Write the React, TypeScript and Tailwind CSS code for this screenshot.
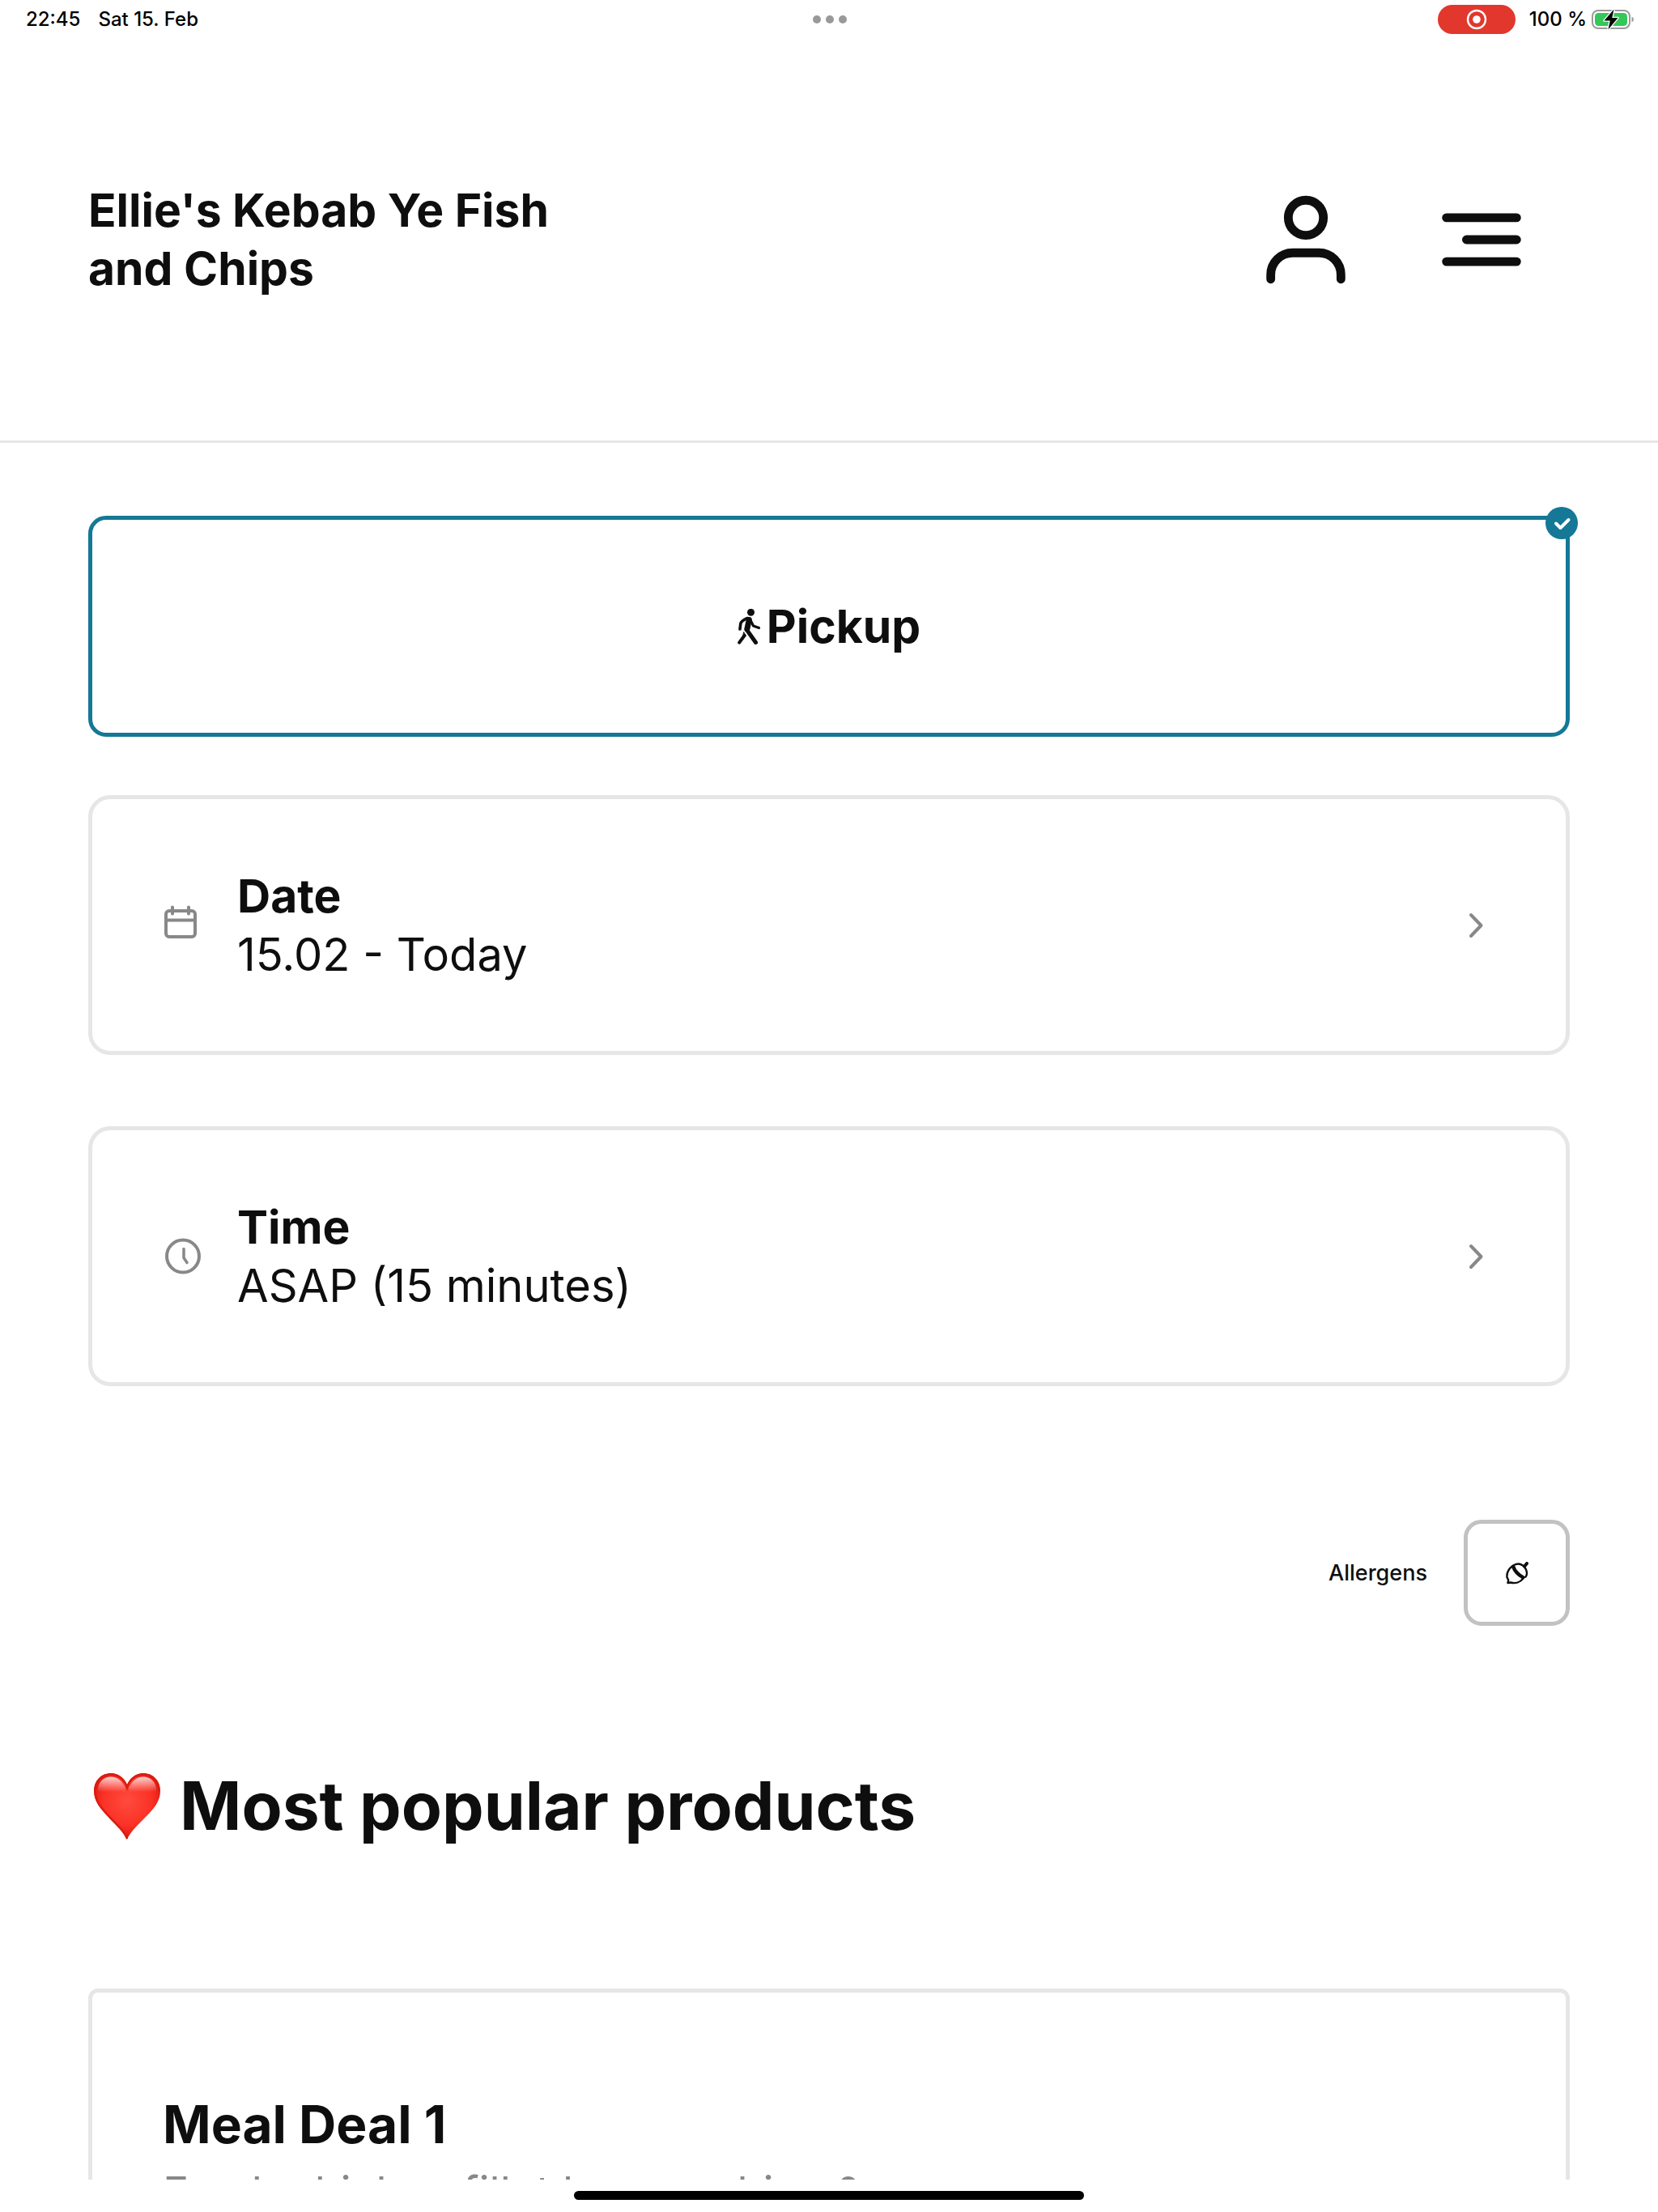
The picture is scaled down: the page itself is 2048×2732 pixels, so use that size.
import type { ReactNode } from "react";

function StatusBar() {
  return (
    <div className="grid h-12 shrink-0 grid-cols-3 items-center pr-[30px] pl-8 text-[24px] leading-[30px] font-medium text-black">
      <div className="flex gap-[22px]">
        <span>22:45</span>
        <span>Sat 15. Feb</span>
      </div>
      <div className="flex justify-center gap-1.5">
        <span className="size-2.5 rounded-full bg-[#999999]" />
        <span className="size-2.5 rounded-full bg-[#999999]" />
        <span className="size-2.5 rounded-full bg-[#999999]" />
      </div>
      <div className="flex items-center justify-end">
        <span className="mr-[17px] flex h-9 w-24 items-center justify-center rounded-full bg-[#e2372d]">
          <svg viewBox="0 0 26 26" className="size-[26px]" aria-hidden="true">
            <circle cx="13" cy="13" r="11" fill="none" stroke="#fff" strokeWidth="2.4" />
            <circle cx="13" cy="13" r="4.8" fill="#fff" />
          </svg>
        </span>
        <span>100 %</span>
        <svg viewBox="0 0 52 28" className="ml-1.5 h-7 w-[52px]" aria-hidden="true">
          <rect x="1" y="3" width="46" height="22" rx="7" fill="none" stroke="#9b9b9b" strokeWidth="2" />
          <path d="M49.500 10.500v7q2.500-1 2.500-3.500t-2.500-3.500z" fill="#9b9b9b" />
          <rect x="4" y="6" width="40" height="16" rx="4.500" fill="#34c759" />
          <path
            d="M27.500 1.500 15.500 15.500h7.300L20.500 26.500 32.500 12h-7.200z"
            fill="#000"
            stroke="#fff"
            strokeWidth="2.600"
            paintOrder="stroke"
            strokeLinejoin="round"
          />
        </svg>
      </div>
    </div>
  );
}

function Header() {
  return (
    <header className="flex shrink-0 items-center justify-between border-b-[3px] border-[#e6e6e6] py-44 pr-[153px] pl-[109px]">
      <h1 className="max-w-[640px] text-[57px] leading-[72px] font-bold">Ellie's Kebab Ye Fish and Chips</h1>
      <div className="flex gap-[87px]">
        <button type="button" aria-label="Account">
          <svg viewBox="0 0 24 24" className="size-[130px]" fill="none" stroke="currentColor" strokeWidth="2" strokeLinecap="round">
            <circle cx="12" cy="7" r="4" />
            <path d="M4 21v-1a5 5 0 0 1 5-5h6a5 5 0 0 1 5 5v1" />
          </svg>
        </button>
        <button type="button" aria-label="Menu">
          <svg viewBox="0 0 24 24" className="size-[130px]" fill="none" stroke="currentColor" strokeWidth="2" strokeLinecap="round">
            <path d="M4 7h16M8.570 12H20M4 17h16" />
          </svg>
        </button>
      </div>
    </header>
  );
}

function WalkingIcon() {
  return (
    <svg viewBox="0 0 32 44" className="h-11 w-8" fill="none" stroke="currentColor" strokeLinecap="round" strokeLinejoin="round" aria-hidden="true">
      <circle cx="16.500" cy="4.300" r="4.500" fill="currentColor" stroke="none" />
      <path d="M3 25l.8-6.500c.5-3 4.500-5.500 8.700-7" strokeWidth="3.600" />
      <path d="M14.300 13.500L11.800 25" strokeWidth="7" />
      <path d="M16 14l3.500 7 7 2.500" strokeWidth="3.200" />
      <path d="M11.500 26l11 15.500" strokeWidth="5" />
      <path d="M8.500 33l-6.300 8.700" strokeWidth="4" />
      <path d="M7.800 29l2.500 4-4 5z" fill="currentColor" strokeWidth="1" />
    </svg>
  );
}

function CalendarIcon() {
  return (
    <svg viewBox="0 0 52 52" className="size-[52px] text-[#888888]" fill="none" stroke="currentColor" strokeWidth="4" aria-hidden="true">
      <rect x="5" y="8" width="36" height="32" rx="4" />
      <path d="M5 19.500h36" />
      <path d="M13 3.500v8M33 3.500v8" strokeLinecap="round" />
    </svg>
  );
}

function ClockIcon() {
  return (
    <svg viewBox="0 0 52 52" className="size-[52px] text-[#888888]" fill="none" stroke="currentColor" aria-hidden="true">
      <circle cx="26" cy="25.500" r="20" strokeWidth="4" />
      <path d="M27 16.500v11l4 6" strokeWidth="3.500" strokeLinecap="round" strokeLinejoin="round" />
    </svg>
  );
}

function OptionCard({ icon, title, value }: { icon: ReactNode; title: string; value: string }) {
  return (
    <button
      type="button"
      className="flex w-full items-center rounded-[27px] border-[5px] border-[#e6e6e6] pt-[84px] pr-[85px] pb-[83px] pl-[86px] text-left"
    >
      {icon}
      <span className="ml-[41px] flex-1 leading-[72px]">
        <span className="block text-[57px] font-bold">{title}</span>
        <span className="block text-[56px]">{value}</span>
      </span>
      <svg viewBox="0 0 52 52" className="size-[52px] text-[#888888]" fill="none" stroke="currentColor" strokeWidth="4" aria-hidden="true">
        <path d="M20 13l12.500 13L20 39" strokeLinecap="round" strokeLinejoin="round" />
      </svg>
    </button>
  );
}

function Heart() {
  return (
    <svg viewBox="0 0 82 82" className="size-[82px]" aria-hidden="true">
      <defs>
        <radialGradient id="heartBody" cx="0.5" cy="0.42" r="0.62">
          <stop offset="0" stopColor="#ff4b3e" />
          <stop offset="0.6" stopColor="#fb3126" />
          <stop offset="0.85" stopColor="#e31c12" />
          <stop offset="1" stopColor="#b80d05" />
        </radialGradient>
        <linearGradient id="heartShine" x1="0" y1="0" x2="0" y2="1">
          <stop offset="0" stopColor="#fff" stopOpacity="0.8" />
          <stop offset="0.85" stopColor="#fff" stopOpacity="0" />
        </linearGradient>
      </defs>
      <path
        d="M41 82C38 74 30 66 20 56 8 44 0 35 0 22 0 9 9 0 21 0c9 0 17 6 20 15C44 6 52 0 61 0c12 0 21 9 21 22 0 13-8 22-20 34C52 66 44 74 41 82z"
        fill="url(#heartBody)"
      />
      <path
        d="M41 81C38 73 30 65 20 55 9 43 1.500 35 1.500 22 1.500 10 10 1.500 21 1.500c9 0 17 6 20 16 3-10 11-16 20-16 11 0 19.500 8.500 19.500 20.500"
        fill="none"
        stroke="#d91c10"
        strokeWidth="2.500"
      />
      <path d="M5 21C5 11 12 4.500 21 4.500c8 0 14 5 18 14v8H5z" fill="url(#heartShine)" />
      <path d="M77 21C77 11 70 4.500 61 4.500c-8 0-14 5-18 14v8h34z" fill="url(#heartShine)" />
    </svg>
  );
}

function AcornIcon() {
  return (
    <svg viewBox="0 0 28 28" className="size-7" fill="none" stroke="currentColor" strokeLinecap="round" strokeLinejoin="round" aria-hidden="true">
      <path d="M8.500 5C3 9 1 14 1.500 19l1.700 3.500L2.500 26l3.500-.5c6 1.800 12-.5 15.500-5" strokeWidth="2.400" />
      <path d="M8.500 5C12 2.500 17 1.500 21 4.500c5.500 4.500 6 11 3.500 14l-4 1.500" strokeWidth="2.400" />
      <path d="M9.500 6.500c1 4 6 10 11.500 12.500" strokeWidth="4.500" />
      <path d="M23.500 5 26 2" strokeWidth="4" />
    </svg>
  );
}

export default function App() {
  return (
    <div className="flex h-screen flex-col overflow-hidden bg-white font-['Inter',sans-serif] text-[#0e0e0e]">
      <StatusBar />
      <div className="min-h-0 flex-1 overflow-hidden">
        <Header />
        <main className="px-[109px] pt-[90px]">
          <button
            type="button"
            aria-pressed="true"
            className="relative flex w-full items-center justify-center gap-1 rounded-[22px] border-[5px] border-[#147896] pt-24 pb-[95px] text-[57px] leading-[72px] font-bold"
          >
            <WalkingIcon />
            Pickup
            <span className="absolute -top-4 -right-[15px] flex size-10 items-center justify-center rounded-full bg-[#147896]">
              <svg viewBox="0 0 40 40" className="size-10" fill="none" stroke="#fff" strokeWidth="4" strokeLinecap="round" strokeLinejoin="round" aria-hidden="true">
                <path d="M13 20.500l5.500 5.500L28.500 16" />
              </svg>
            </span>
          </button>

          <div className="mt-[72px] flex flex-col gap-[88px]">
            <OptionCard icon={<CalendarIcon />} title="Date" value="15.02 - Today" />
            <OptionCard icon={<ClockIcon />} title="Time" value="ASAP (15 minutes)" />
          </div>

          <div className="mt-[165px] flex items-center justify-end gap-[45px]">
            <label htmlFor="allergens" className="text-[27px] leading-9 font-medium">
              Allergens
            </label>
            <button
              id="allergens"
              type="button"
              className="flex size-[131px] items-center justify-center rounded-[22px] border-[5px] border-[#c2c2c2]"
            >
              <AcornIcon />
            </button>
          </div>

          <h2 className="mt-[171px] flex items-center gap-6 pl-[7px] text-[82px] leading-[104px] font-bold">
            <Heart />
            Most popular products
          </h2>

          <article className="mt-[173px] rounded-[12px] border-[5px] border-[#e6e6e6] px-[87px] pt-[123px] pb-20">
            <h3 className="text-[64px] leading-[80px] font-bold">Meal Deal 1</h3>
            <p className="mt-3 text-[54px] leading-[64px] text-[#888888]">Fresh chicken fillet burger chips &amp; can</p>
          </article>
        </main>
      </div>
      <div className="flex h-10 shrink-0 justify-center pt-3.5">
        <span className="h-[11px] w-[630px] rounded-full bg-black" />
      </div>
    </div>
  );
}
